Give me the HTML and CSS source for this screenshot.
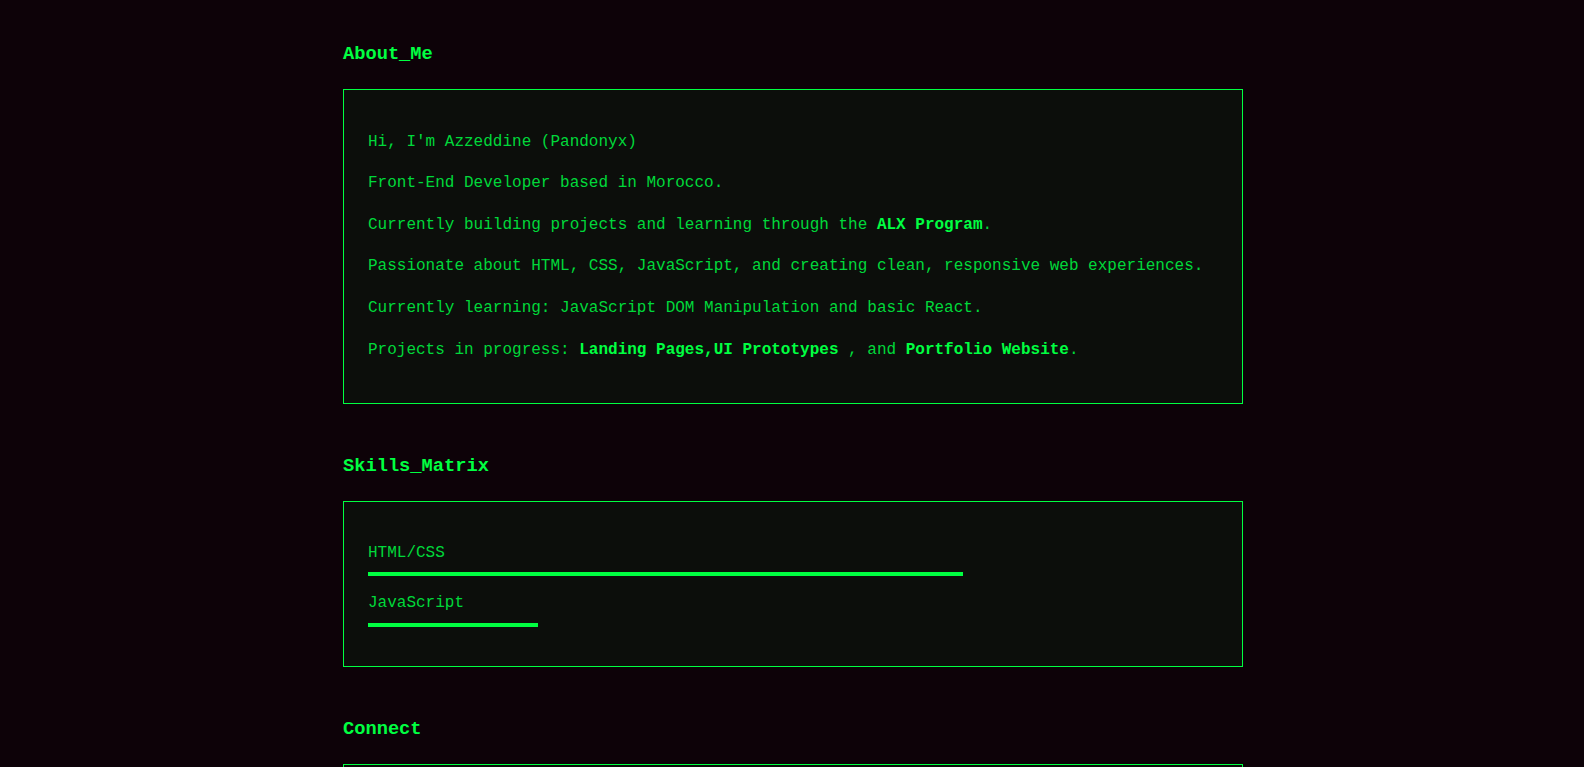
FILE: index.html
```html
<!DOCTYPE html>
<html lang="en">
<head>
<meta charset="utf-8">
<title>Pandonyx</title>
<link rel="stylesheet" href="styles.css">
</head>
<body>
<main class="container">
  <section class="section">
    <h3 class="section-title">About_Me</h3>
    <div class="panel">
      <p class="line">Hi, I'm Azzeddine (Pandonyx)</p>
      <p class="line">Front-End Developer based in Morocco.</p>
      <p class="line">Currently building projects and learning through the <strong class="hl">ALX Program</strong>.</p>
      <p class="line">Passionate about HTML, CSS, JavaScript, and creating clean, responsive web experiences.</p>
      <p class="line">Currently learning: JavaScript DOM Manipulation and basic React.</p>
      <p class="line">Projects in progress: <strong class="hl">Landing Pages,UI Prototypes</strong> , and <strong class="hl">Portfolio Website</strong>.</p>
    </div>
  </section>
  <section class="section">
    <h3 class="section-title">Skills_Matrix</h3>
    <div class="panel">
      <div class="skill">
        <div class="skill-label">HTML/CSS</div>
        <div class="skill-bar" style="width:70%"></div>
      </div>
      <div class="skill">
        <div class="skill-label">JavaScript</div>
        <div class="skill-bar" style="width:20%"></div>
      </div>
    </div>
  </section>
  <section class="section">
    <h3 class="section-title">Connect</h3>
    <div class="panel">
      <p class="line">&nbsp;</p>
    </div>
  </section>
</main>
</body>
</html>
```
FILE: styles.css
```css
html, body {
  margin: 0;
  padding: 0;
  background: #0d0208;
}
body {
  font-family: "Liberation Mono", "Courier New", monospace;
  font-size: 16px;
  line-height: 1.6;
  color: #00d83a;
}
.container {
  max-width: 900px;
  margin: 0 auto;
  padding: 40px 0 0 2px;
}
.section {
  margin-bottom: 48px;
}
.section-title {
  font-size: 18.72px;
  font-weight: bold;
  color: #00ff41;
  margin: 0 0 18.72px;
  line-height: 1.6;
}
.panel {
  border: 1px solid #00ff41;
  background: #0c0e0b;
  padding: 24px;
}
.line {
  margin: 16px 0;
}
.hl {
  color: #00ff41;
  font-weight: bold;
}
.skill {
  margin: 15px 0;
}
.skill-label {
  color: #00d83a;
}
.skill-bar {
  height: 4px;
  margin-top: 6px;
  background: #00ff41;
}
```
